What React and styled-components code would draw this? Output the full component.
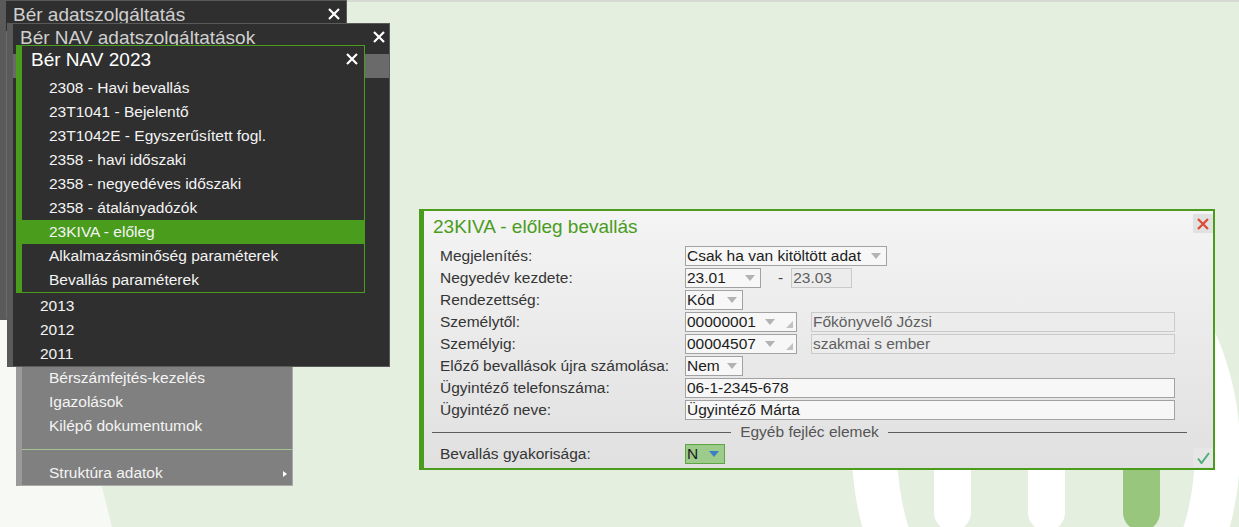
import React from "react";
import styled, { createGlobalStyle } from "styled-components";

const GREEN = "#4a9c1d";
const PAGE = "#e4efdf";

const GlobalStyle = createGlobalStyle`
  html, body { margin: 0; padding: 0; background: ${PAGE}; }
  #root { width: 1239px; height: 527px; }
`;

const Desktop = styled.div`
  position: relative;
  width: 1239px;
  height: 527px;
  overflow: hidden;
  background: ${PAGE};
  font-family: "Liberation Sans", Arial, sans-serif;
`;

const Backdrop = styled.svg`
  position: absolute;
  left: 0;
  top: 0;
`;

const Window = styled.section`
  position: absolute;
  left: ${(p) => p.$x}px;
  top: ${(p) => p.$y}px;
  width: ${(p) => p.$w}px;
  height: ${(p) => p.$h}px;
  box-sizing: border-box;
  display: flex;
  flex-direction: column;
  background: ${(p) => p.$bg || "#2f2f2f"};
  border: 1px solid ${(p) => p.$edge};
  border-left: 6px solid ${(p) => p.$edge};
  overflow: hidden;
`;

const TitleBar = styled.header`
  flex: none;
  display: flex;
  align-items: flex-start;
  justify-content: space-between;
  height: 30px;
  padding: 0 ${(p) => p.$pr}px 0 ${(p) => p.$pl}px;
  background: #2f2f2f;
  color: ${(p) => p.$color};
  font-size: 19px;
  line-height: 28px;
  white-space: nowrap;
`;

const CloseIcon = styled.svg`
  flex: none;
  margin-top: 7px;
`;

const MenuList = styled.ul`
  list-style: none;
  margin: 0;
  padding: 0;
`;

const MenuItem = styled.li`
  position: relative;
  height: 24px;
  line-height: 24px;
  padding-left: 27px;
  font-size: 15.5px;
  color: #f4f4f4;
  background: ${(p) => p.$active || "transparent"};
  white-space: nowrap;
`;

const MenuRule = styled.li`
  height: 23px;
  display: flex;
  align-items: center;
  &::after {
    content: "";
    flex: 1;
    height: 1px;
    background: #a5c491;
  }
`;

const SubArrow = styled.span`
  position: absolute;
  right: 5px;
  top: 10px;
  border-top: 3.5px solid transparent;
  border-bottom: 3.5px solid transparent;
  border-left: 4px solid #ffffff;
`;

const MenuPanel = styled.nav`
  position: absolute;
  left: 16px;
  top: 366px;
  width: 277px;
  box-sizing: border-box;
  background: #808080;
  border-left: 6px solid #9a9a9a;
  border-right: 1px solid #a9a9a9;
  border-bottom: 1px solid #a9a9a9;
`;

const Dialog = styled.section`
  position: absolute;
  left: 419px;
  top: 209px;
  width: 796px;
  height: 261px;
  box-sizing: border-box;
  display: flex;
  flex-direction: column;
  border: 2px solid ${GREEN};
  border-left-width: 5px;
  background: linear-gradient(#f4f4f4, #e0e0e0);
`;

const DialogHead = styled.header`
  display: flex;
  justify-content: space-between;
  align-items: flex-start;
  height: 34px;
`;

const DialogTitle = styled.h1`
  margin: 0;
  padding-left: 9px;
  font-size: 19px;
  font-weight: normal;
  line-height: 32px;
  color: ${GREEN};
`;

const ToolButton = styled.button`
  width: 20px;
  height: 19px;
  margin-top: 3px;
  padding: 0;
  border: 0;
  background: #e1e1e1;
  display: flex;
  align-items: center;
  justify-content: center;
`;

const CornerButton = styled(ToolButton)`
  position: absolute;
  right: 0;
  bottom: 1px;
  background: #e6e6e6;
`;

const Form = styled.div`
  display: flex;
  flex-direction: column;
  padding: 0 38px 0 16px;
`;

const FormRow = styled.div`
  display: grid;
  grid-template-columns: 245px 1fr;
  align-items: center;
  height: 22px;
`;

const Label = styled.span`
  font-size: 15.5px;
  color: #353535;
  white-space: nowrap;
`;

const Controls = styled.div`
  display: flex;
  align-items: center;
`;

const Box = styled.div`
  box-sizing: border-box;
  width: ${(p) => p.$w}px;
  height: 20px;
  display: flex;
  align-items: center;
  margin-left: ${(p) => p.$ml || 0}px;
  padding: 0 ${(p) => p.$pr || 4}px 0 1px;
  border: 1px solid ${(p) => (p.$green ? "#5ea543" : p.$disabled ? "#cacaca" : "#a2a2a2")};
  background: ${(p) => (p.$green ? "#9dcb8b" : p.$disabled ? "#ececec" : "#f7f7f7")};
  color: ${(p) => (p.$disabled ? "#5f5f5f" : "#1c1c1c")};
  font-size: 15.5px;
  line-height: 18px;
  white-space: nowrap;
  overflow: hidden;
`;

const Caret = styled.span`
  flex: none;
  margin-left: auto;
  width: 0;
  height: 0;
  border-left: 5px solid transparent;
  border-right: 5px solid transparent;
  border-top: 6px solid ${(p) => p.$color || "#b3b3b3"};
`;

const Grip = styled.span`
  flex: none;
  align-self: flex-end;
  margin: 0 0 3px 11px;
  width: 0;
  height: 0;
  border-left: 7px solid transparent;
  border-bottom: 7px solid #c2c2c2;
`;

const Dash = styled.span`
  margin: 0 8px 0 17px;
  font-size: 15.5px;
  color: #444;
`;

const Divider = styled.div`
  display: flex;
  align-items: center;
  height: 22px;
  margin: 0 -12px 0 -8px;
  font-size: 15.5px;
  color: #555;
  &::before,
  &::after {
    content: "";
    flex: 1;
    height: 1px;
    background: #5c5c5c;
  }
  span {
    padding: 0 9px;
  }
`;

const CloseX = ({ color = "#ffffff" }) => (
  <CloseIcon width="12" height="12" viewBox="0 0 12 12">
    <path d="M1 1 L11 11 M11 1 L1 11" stroke={color} strokeWidth="2.2" fill="none" />
  </CloseIcon>
);

const Select = ({ w, children, grip, green, caret }) => (
  <Box $w={w} $green={green} $pr={grip ? 3 : 5}>
    <span>{children}</span>
    <Caret $color={caret} />
    {grip && <Grip />}
  </Box>
);

const navItems = [
  "2308 - Havi bevallás",
  "23T1041 - Bejelentő",
  "23T1042E - Egyszerűsített fogl.",
  "2358 - havi időszaki",
  "2358 - negyedéves időszaki",
  "2358 - átalányadózók",
  "23KIVA - előleg",
  "Alkalmazásminőség paraméterek",
  "Bevallás paraméterek",
];

// rows 0-9 of this list lie under the "Bér NAV 2023" window, only the highlight of row 0 peeks out
const years = ["", "", "", "", "", "", "", "", "", "", "2013", "2012", "2011"];

const Background = () => (
  <Backdrop width="1239" height="527" viewBox="0 0 1239 527">
    <rect x="0" y="0" width="1239" height="2" fill="#d6d9d4" />
    <polygon points="-20,0 112,527 -20,527" fill="#f6f9f4" />
    <ellipse cx="1046" cy="450" rx="194" ry="240" fill="#ffffff" />
    <ellipse cx="1046" cy="450" rx="149" ry="200" fill={PAGE} />
    <rect x="934" y="300" width="37" height="231" rx="18.5" fill="#ffffff" />
    <rect x="1028" y="300" width="37" height="231" rx="18.5" fill="#ffffff" />
    <rect x="1123" y="300" width="37" height="231" rx="18.5" fill="#98c67c" />
  </Backdrop>
);

export default function App() {
  return (
    <Desktop>
      <GlobalStyle />
      <Background />

      <Window $x={0} $y={0} $w={347} $h={320} $edge="#5a5a5a" $bg="#6a6a6a">
        <TitleBar $pl={7} $pr={6} $color="#cfcfcf">
          <span>Bér adatszolgáltatás</span>
          <CloseX />
        </TitleBar>
      </Window>

      <MenuPanel>
        <MenuList>
          <MenuItem>Bérszámfejtés-kezelés</MenuItem>
          <MenuItem>Igazolások</MenuItem>
          <MenuItem>Kilépő dokumentumok</MenuItem>
          <MenuRule />
          <MenuItem>
            Struktúra adatok
            <SubArrow />
          </MenuItem>
        </MenuList>
      </MenuPanel>

      <Window $x={7} $y={23} $w={383} $h={344} $edge="#5a5a5a">
        <TitleBar $pl={7} $pr={4} $color="#cfcfcf">
          <span>Bér NAV adatszolgáltatások</span>
          <CloseX />
        </TitleBar>
        <MenuList>
          {years.map((y, i) => (
            <MenuItem key={i} $active={i === 0 ? "#6a6a6a" : undefined}>
              {y}
            </MenuItem>
          ))}
        </MenuList>
      </Window>

      <Window $x={16} $y={45} $w={349} $h={248} $edge={GREEN}>
        <TitleBar $pl={9} $pr={6} $color="#ffffff">
          <span>Bér NAV 2023</span>
          <CloseX />
        </TitleBar>
        <MenuList>
          {navItems.map((t) => (
            <MenuItem key={t} $active={t === "23KIVA - előleg" ? GREEN : undefined}>
              {t}
            </MenuItem>
          ))}
        </MenuList>
      </Window>

      <Dialog>
        <DialogHead>
          <DialogTitle>23KIVA - előleg bevallás</DialogTitle>
          <ToolButton aria-label="Bezárás">
            <svg width="12" height="12" viewBox="0 0 12 12">
              <path d="M1 1 L11 11 M11 1 L1 11" stroke="#dc4b36" strokeWidth="2.3" fill="none" />
            </svg>
          </ToolButton>
        </DialogHead>

        <Form>
          <FormRow>
            <Label>Megjelenítés:</Label>
            <Controls>
              <Select w={202}>Csak ha van kitöltött adat</Select>
            </Controls>
          </FormRow>
          <FormRow>
            <Label>Negyedév kezdete:</Label>
            <Controls>
              <Select w={76}>23.01</Select>
              <Dash>-</Dash>
              <Box $w={61} $disabled>
                23.03
              </Box>
            </Controls>
          </FormRow>
          <FormRow>
            <Label>Rendezettség:</Label>
            <Controls>
              <Select w={58}>Kód</Select>
            </Controls>
          </FormRow>
          <FormRow>
            <Label>Személytől:</Label>
            <Controls>
              <Select w={112} grip>
                00000001
              </Select>
              <Box $w={364} $ml={14} $disabled>
                Főkönyvelő Józsi
              </Box>
            </Controls>
          </FormRow>
          <FormRow>
            <Label>Személyig:</Label>
            <Controls>
              <Select w={112} grip>
                00004507
              </Select>
              <Box $w={364} $ml={14} $disabled>
                szakmai s ember
              </Box>
            </Controls>
          </FormRow>
          <FormRow>
            <Label>Előző bevallások újra számolása:</Label>
            <Controls>
              <Select w={58}>Nem</Select>
            </Controls>
          </FormRow>
          <FormRow>
            <Label>Ügyintéző telefonszáma:</Label>
            <Controls>
              <Box $w={490}>06-1-2345-678</Box>
            </Controls>
          </FormRow>
          <FormRow>
            <Label>Ügyintéző neve:</Label>
            <Controls>
              <Box $w={490}>Ügyintéző Márta</Box>
            </Controls>
          </FormRow>
          <Divider>
            <span>Egyéb fejléc elemek</span>
          </Divider>
          <FormRow>
            <Label>Bevallás gyakorisága:</Label>
            <Controls>
              <Select w={40} green caret="#3d7fc6">
                N
              </Select>
            </Controls>
          </FormRow>
        </Form>

        <CornerButton aria-label="Rendben">
          <svg width="13" height="12" viewBox="0 0 13 12">
            <path d="M1 6.5 L4.5 11 L12 1" stroke="#4dae78" strokeWidth="2" fill="none" />
          </svg>
        </CornerButton>
      </Dialog>
    </Desktop>
  );
}
